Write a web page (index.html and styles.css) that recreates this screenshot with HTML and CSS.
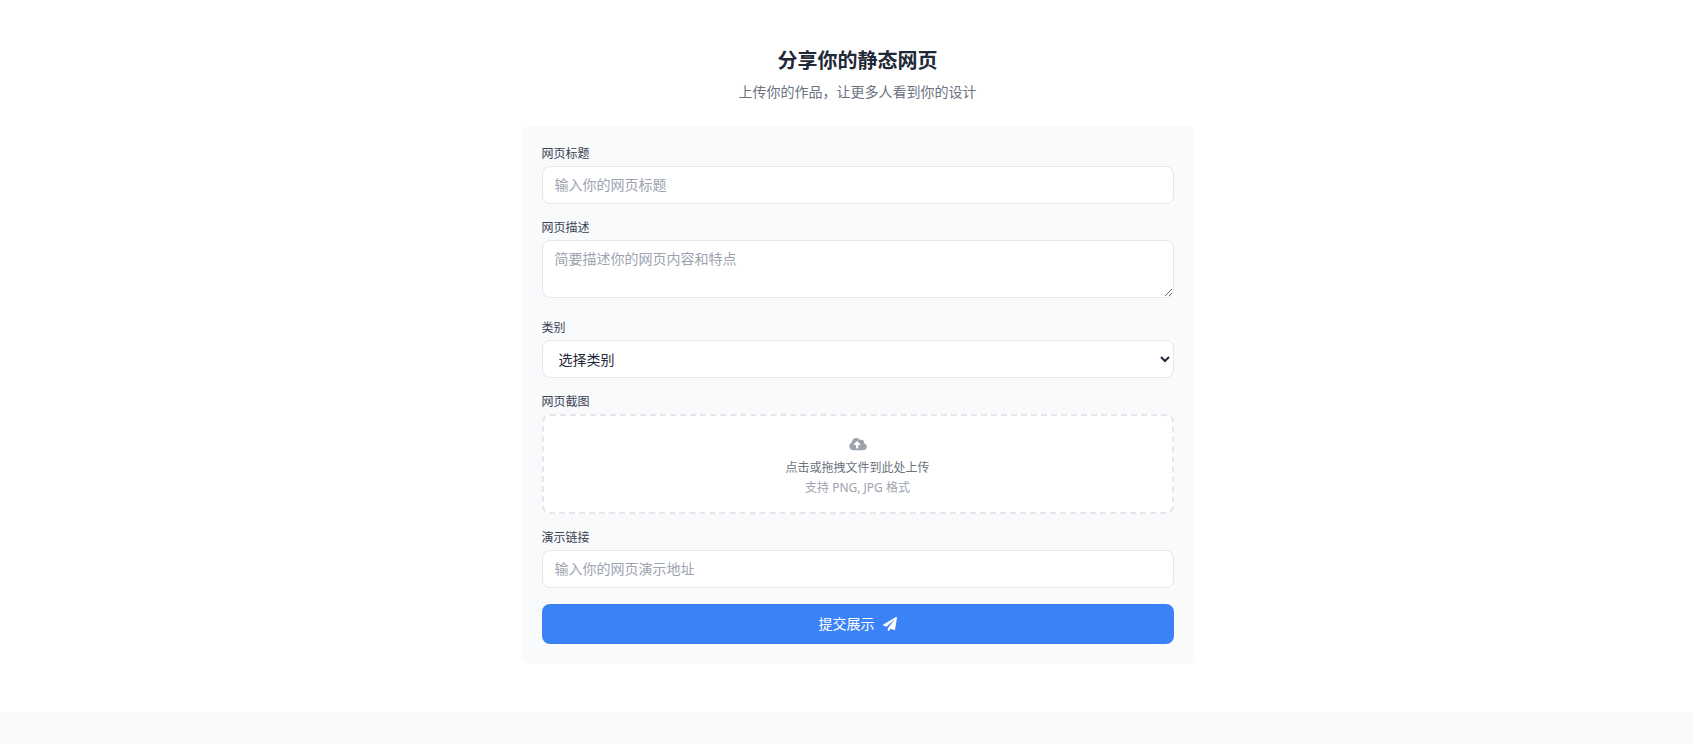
FILE: index.html
```html
<!DOCTYPE html>
<html lang="zh-CN">
<head>
<meta charset="utf-8">
<meta name="viewport" content="width=device-width, initial-scale=1">
<title>分享你的静态网页</title>
<link rel="stylesheet" href="styles.css">
</head>
<body>
<section class="share">
  <div class="container">
    <header class="heading">
      <h2 class="title">分享你的静态网页</h2>
      <p class="subtitle">上传你的作品，让更多人看到你的设计</p>
    </header>
    <form class="card">
      <div class="field">
        <label class="label" for="page-title">网页标题</label>
        <input class="control" id="page-title" type="text" placeholder="输入你的网页标题">
      </div>
      <div class="field field-description">
        <label class="label" for="page-description">网页描述</label>
        <textarea class="control" id="page-description" rows="2" placeholder="简要描述你的网页内容和特点"></textarea>
      </div>
      <div class="field">
        <label class="label" for="page-category">类别</label>
        <select class="control" id="page-category">
          <option>选择类别</option>
        </select>
      </div>
      <div class="field">
        <label class="label" for="page-shot">网页截图</label>
        <label class="dropzone" for="page-shot">
          <span class="cloud">
            <svg width="18" height="14" viewBox="0 0 640 512" fill="currentColor" aria-hidden="true"><path d="M537.600 226.600c4.100-10.700 6.400-22.400 6.400-34.600 0-53-43-96-96-96-19.700 0-38.100 6-53.300 16.200C367 64.200 315.300 32 256 32c-88.400 0-160 71.600-160 160 0 2.700.1 5.400.2 8.100C40.200 219.800 0 273.200 0 336c0 79.500 64.500 144 144 144h368c70.700 0 128-57.300 128-128 0-61.900-44-113.600-102.400-125.400zM393.400 288H328v112c0 8.800-7.200 16-16 16h-48c-8.800 0-16-7.200-16-16V288h-65.400c-14.300 0-21.400-17.200-11.300-27.300l105.400-105.400c6.200-6.200 16.400-6.200 22.600 0l105.400 105.400c10.100 10.100 2.900 27.300-11.300 27.300z"/></svg>
          </span>
          <span class="drop-text">点击或拖拽文件到此处上传</span>
          <span class="drop-hint">支持 PNG, JPG 格式</span>
        </label>
        <input id="page-shot" type="file" accept="image/png,image/jpeg" hidden>
      </div>
      <div class="field">
        <label class="label" for="page-link">演示链接</label>
        <input class="control" id="page-link" type="url" placeholder="输入你的网页演示地址">
      </div>
      <button class="submit" type="submit">
        提交展示
        <svg width="14" height="14" viewBox="0 0 512 512" fill="currentColor" aria-hidden="true"><path d="M476 3.200L12.500 270.600c-18.100 10.400-15.800 35.600 2.200 43.200L121 358.400l287.300-253.200c5.500-4.900 13.300 2.600 8.600 8.300L176 407v80.500c0 23.600 28.500 32.900 42.500 15.800L282 426l124.600 52.200c14.200 6 30.400-2.900 33-18.200l72-432C515 7.800 493.300-6.800 476 3.200z"/></svg>
      </button>
    </form>
  </div>
</section>
</body>
</html>
```
FILE: styles.css
```css
*,
*::before,
*::after {
  box-sizing: border-box;
}

body {
  margin: 0;
  background: #f9fafc;
  color: #1f2937;
  font-family: "Noto Sans", "Noto Sans CJK SC", sans-serif;
  font-size: 14px;
  line-height: 20px;
}

.share {
  padding: 47px 0 48px 22px;
  background: #fff;
}

.container {
  max-width: 672px;
  margin: 0 auto;
}

.heading {
  margin-bottom: 24px;
  text-align: center;
}

.title {
  margin: 0 0 7px;
  font-size: 20px;
  line-height: 28px;
  font-weight: 700;
}

.subtitle {
  margin: 0;
  color: #6b7280;
}

.card {
  display: flex;
  flex-direction: column;
  gap: 16px;
  padding: 20px;
  border-radius: 8px;
  background: #f9fafc;
}

.field {
  display: flex;
  flex-direction: column;
  gap: 4px;
}

.field-description {
  padding-bottom: 6px;
}

.label {
  color: #374151;
  font-size: 12px;
  line-height: 16px;
}

.control {
  display: block;
  width: 100%;
  margin: 0;
  padding: 8px 12px;
  border: 1px solid #e5e7eb;
  border-radius: 8px;
  background: #fff;
  color: inherit;
  font: inherit;
}

textarea.control {
  resize: vertical;
}

select.control {
  height: 38px;
  padding-right: 0;
}

.control::placeholder {
  color: #9ca3af;
  opacity: 1;
}

.dropzone {
  display: flex;
  flex-direction: column;
  align-items: center;
  gap: 4px;
  padding: 16px;
  border: 2px dashed #e5e7eb;
  border-radius: 8px;
  background: #fff;
  font-size: 12px;
  line-height: 16px;
  cursor: pointer;
}

.cloud {
  display: flex;
  align-items: center;
  height: 24px;
  color: #9ca3af;
}

.drop-text {
  color: #6b7280;
}

.drop-hint {
  color: #9ca3af;
}

.submit {
  display: flex;
  align-items: center;
  justify-content: center;
  gap: 8px;
  width: 100%;
  padding: 10px 16px;
  border: 0;
  border-radius: 8px;
  background: #3b82f6;
  color: #fff;
  font: inherit;
  cursor: pointer;
}
```
